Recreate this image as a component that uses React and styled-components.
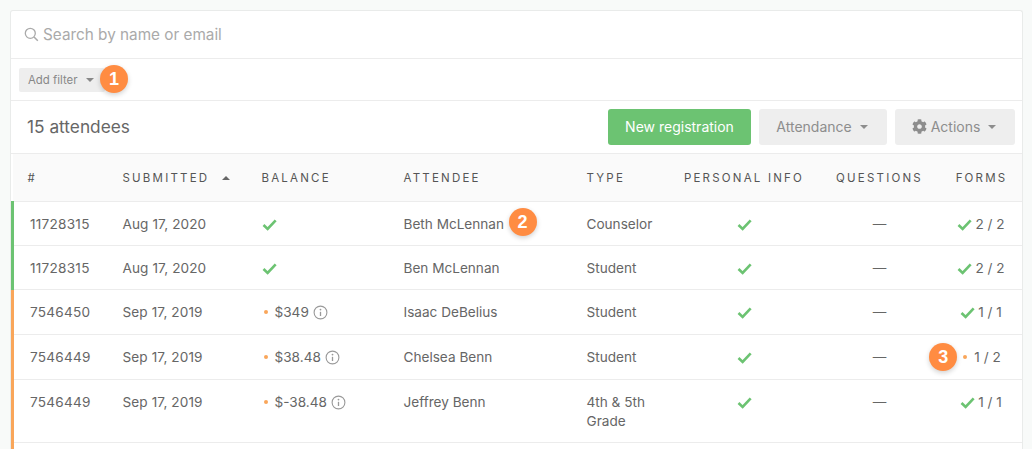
import React from "react";
import styled, { createGlobalStyle } from "styled-components";
import { FaCog } from "react-icons/fa";

const GlobalStyle = createGlobalStyle`
  html, body {
    margin: 0;
    background: #f8faf9;
    height: 449px;
    overflow: hidden;
    font-family: Inter, "Liberation Sans", sans-serif;
    color: #666;
  }
`;

const rows = [
  { id: "11728315", date: "Aug 17, 2020", name: "Beth McLennan", type: "Counselor", forms: "2 / 2", tone: "green", height: 44, badge: 2 },
  { id: "11728315", date: "Aug 17, 2020", name: "Ben McLennan", type: "Student", forms: "2 / 2", tone: "green", height: 44 },
  { id: "7546450", date: "Sep 17, 2019", balance: "$349", name: "Isaac DeBelius", type: "Student", forms: "1 / 1", tone: "orange", height: 45 },
  { id: "7546449", date: "Sep 17, 2019", balance: "$38.48", name: "Chelsea Benn", type: "Student", forms: "1 / 2", formsPending: true, tone: "orange", height: 45 },
  { id: "7546449", date: "Sep 17, 2019", balance: "$-38.48", name: "Jeffrey Benn", type: "4th & 5th Grade", forms: "1 / 1", tone: "orange", height: 63 },
];

const Check = ({ size = 15 }) => (
  <CheckSvg width={size} height={size} viewBox="0 0 16 16">
    <path d="M1.6 8.6 L6 12.8 L14.6 3.6" fill="none" stroke="#6cc372" strokeWidth="2.8" />
  </CheckSvg>
);

const SearchIcon = () => (
  <svg width="15" height="15" viewBox="0 0 15 15">
    <circle cx="6.3" cy="6.3" r="5" fill="none" stroke="#aaa" strokeWidth="1.3" />
    <path d="M10 10 L13.8 13.8" stroke="#aaa" strokeWidth="1.5" />
  </svg>
);

const InfoIcon = () => (
  <InfoSvg width="15" height="15" viewBox="0 0 15 15">
    <circle cx="7.5" cy="7.5" r="6.4" fill="none" stroke="#999" strokeWidth="1.1" />
    <circle cx="7.5" cy="4.6" r="0.9" fill="#999" />
    <path d="M7.5 6.8 V11" stroke="#999" strokeWidth="1.3" />
  </InfoSvg>
);

const App = () => (
  <>
    <GlobalStyle />
    <Page>
      <Card>
        <SearchRow>
          <SearchIcon />
          <SearchText>Search by name or email</SearchText>
        </SearchRow>
        <FilterRow>
          <FilterButton>
            Add filter <Caret $color="#888" />
          </FilterButton>
          <FilterBadge>1</FilterBadge>
        </FilterRow>
        <Toolbar>
          <Count>15 attendees</Count>
          <PrimaryButton>New registration</PrimaryButton>
          <GreyButton $width={128}>
            Attendance <Caret $color="#8d8d8d" />
          </GreyButton>
          <GreyButton $width={120}>
            <FaCog size={15} color="#8d8d8d" /> Actions <Caret $color="#8d8d8d" />
          </GreyButton>
        </Toolbar>
        <Table>
          <colgroup>
            <col width="110" />
            <col width="139" />
            <col width="142" />
            <col width="183" />
            <col width="85" />
            <col width="145" />
            <col width="126" />
            <col width="80" />
          </colgroup>
          <thead>
            <tr>
              <Th $first>#</Th>
              <Th>
                Submitted <SortCaret />
              </Th>
              <Th>Balance</Th>
              <Th>Attendee</Th>
              <Th>Type</Th>
              <Th $align="center">Personal info</Th>
              <Th $align="center">Questions</Th>
              <FormsTh $align="center">Forms</FormsTh>
            </tr>
          </thead>
          <tbody>
            {rows.map((row, i) => (
              <Row key={i} $height={row.height}>
                <IdCell $tone={row.tone}>{row.id}</IdCell>
                <DateCell>{row.date}</DateCell>
                <Td>
                  {row.balance ? (
                    <>
                      <Dot />
                      {row.balance}
                      <InfoIcon />
                    </>
                  ) : (
                    <Check />
                  )}
                </Td>
                <Td>
                  <NameWrap>
                    {row.name}
                    {row.badge && <NameBadge>{row.badge}</NameBadge>}
                  </NameWrap>
                </Td>
                <TypeCell>{row.type}</TypeCell>
                <Td $align="center">
                  <Check />
                </Td>
                <Td $align="center">—</Td>
                <FormsCell $align="center">
                  <FormsWrap>
                    {row.formsPending ? (
                      <>
                        <FormsBadge>3</FormsBadge>
                        <Dot />
                      </>
                    ) : (
                      <FormsCheck>
                        <Check />
                      </FormsCheck>
                    )}
                    {row.forms}
                  </FormsWrap>
                </FormsCell>
              </Row>
            ))}
            <Row $height={20}>
              <IdCell $tone="orange" />
              <Td colSpan={7} />
            </Row>
          </tbody>
        </Table>
      </Card>
    </Page>
  </>
);

const Page = styled.div`
  padding: 10px 9px 0 10px;
`;

const Card = styled.div`
  background: #fff;
  border: 1px solid #e9ebea;
  border-bottom: none;
  border-radius: 3px 3px 0 0;
  height: 439px;
  overflow: hidden;
  box-sizing: border-box;
`;

const SearchRow = styled.div`
  height: 47px;
  display: flex;
  align-items: center;
  gap: 4px;
  padding-left: 13px;
  border-bottom: 1px solid #ececec;
`;

const SearchText = styled.span`
  font-size: 15.3px;
  color: #aaa;
`;

const FilterRow = styled.div`
  position: relative;
  height: 32px;
  padding: 9px 0 0 8px;
  border-bottom: 1px solid #ececec;
`;

const FilterButton = styled.div`
  display: inline-flex;
  align-items: center;
  gap: 5px;
  width: 86px;
  height: 24px;
  padding-left: 9px;
  box-sizing: border-box;
  background: #eee;
  border-radius: 2px;
  font-size: 11.4px;
  color: #888;
`;

const Badge = styled.span`
  position: absolute;
  width: 28px;
  height: 28px;
  border-radius: 50%;
  background: #ff8c42;
  color: #fff;
  font-size: 18px;
  font-weight: 700;
  font-family: "Liberation Sans", sans-serif;
  display: flex;
  align-items: center;
  justify-content: center;
  box-shadow: 0 2px 5px rgba(0, 0, 0, 0.18);
`;

const FilterBadge = styled(Badge)`
  left: 89px;
  top: 6px;
`;

const NameBadge = styled(Badge)`
  left: 105px;
  top: -7px;
`;

const FormsBadge = styled(Badge)`
  left: -32px;
  top: -5px;
`;

const Caret = styled.i`
  display: inline-block;
  width: 0;
  height: 0;
  margin-left: 4px;
  border-left: 4px solid transparent;
  border-right: 4px solid transparent;
  border-top: 4px solid ${(p) => p.$color};
`;

const SortCaret = styled.i`
  display: inline-block;
  width: 0;
  height: 0;
  margin: 0 0 2px 7px;
  border-left: 4px solid transparent;
  border-right: 4px solid transparent;
  border-bottom: 4px solid #666;
`;

const Toolbar = styled.div`
  height: 53px;
  display: flex;
  align-items: center;
  padding: 0 7px 0 16px;
  gap: 8px;
  border-bottom: 1px solid #ececec;
  box-sizing: border-box;
`;

const Count = styled.div`
  font-size: 17.3px;
  color: #666;
  margin-right: auto;
  padding-bottom: 1px;
`;

const PrimaryButton = styled.div`
  width: 143px;
  height: 36px;
  padding-bottom: 1px;
  box-sizing: border-box;
  background: #6cc372;
  color: #fff;
  border-radius: 3px;
  font-size: 14px;
  display: flex;
  align-items: center;
  justify-content: center;
`;

const GreyButton = styled.div`
  width: ${(p) => p.$width}px;
  height: 36px;
  padding: 0 2px 1px 0;
  box-sizing: border-box;
  background: #eee;
  color: #8d8d8d;
  border-radius: 3px;
  font-size: 14px;
  display: flex;
  align-items: center;
  justify-content: center;
  gap: 4px;
`;

const Table = styled.table`
  width: 1010px;
  table-layout: fixed;
  border-collapse: collapse;
  font-size: 13.6px;
  color: #666;
`;

const Th = styled.th`
  height: 47px;
  padding: 0 0 0 ${(p) => (p.$first ? "15px" : "0")};
  background: #fafafa;
  border-bottom: 1px solid #ececec;
  text-align: ${(p) => p.$align || "left"};
  text-transform: uppercase;
  font-size: 11.5px;
  font-weight: 400;
  letter-spacing: 2.2px;
  white-space: nowrap;
  color: #555;
`;

const FormsTh = styled(Th)`
  padding-right: 2px;
`;

const Row = styled.tr`
  height: ${(p) => p.$height}px;
`;

const Td = styled.td`
  padding: 13px 0 0;
  border-bottom: 1px solid #ececec;
  text-align: ${(p) => p.$align || "left"};
  vertical-align: top;
  line-height: 19px;
  white-space: nowrap;
`;

const IdCell = styled(Td)`
  padding-left: 16px;
  letter-spacing: 0.25px;
  border-left: 3px solid ${(p) => (p.$tone === "green" ? "#6cc372" : "#f9a65a")};
`;

const DateCell = styled(Td)`
  letter-spacing: 0.1px;
`;

const TypeCell = styled(Td)`
  white-space: normal;
  padding-right: 20px;
`;

const FormsCell = styled(Td)`
  padding-right: 3px;
`;

const NameWrap = styled.span`
  position: relative;
  display: inline-block;
`;

const FormsWrap = styled.span`
  position: relative;
  display: inline-block;
`;

const FormsCheck = styled.span`
  margin-right: 3px;
`;

const CheckSvg = styled.svg`
  vertical-align: -3px;
`;

const InfoSvg = styled.svg`
  vertical-align: -3px;
  margin-left: 4px;
`;

const Dot = styled.i`
  display: inline-block;
  width: 4px;
  height: 4px;
  border-radius: 50%;
  background: #f9a65a;
  margin: 0 7px 3px 2px;
  vertical-align: middle;
`;

export default App;
